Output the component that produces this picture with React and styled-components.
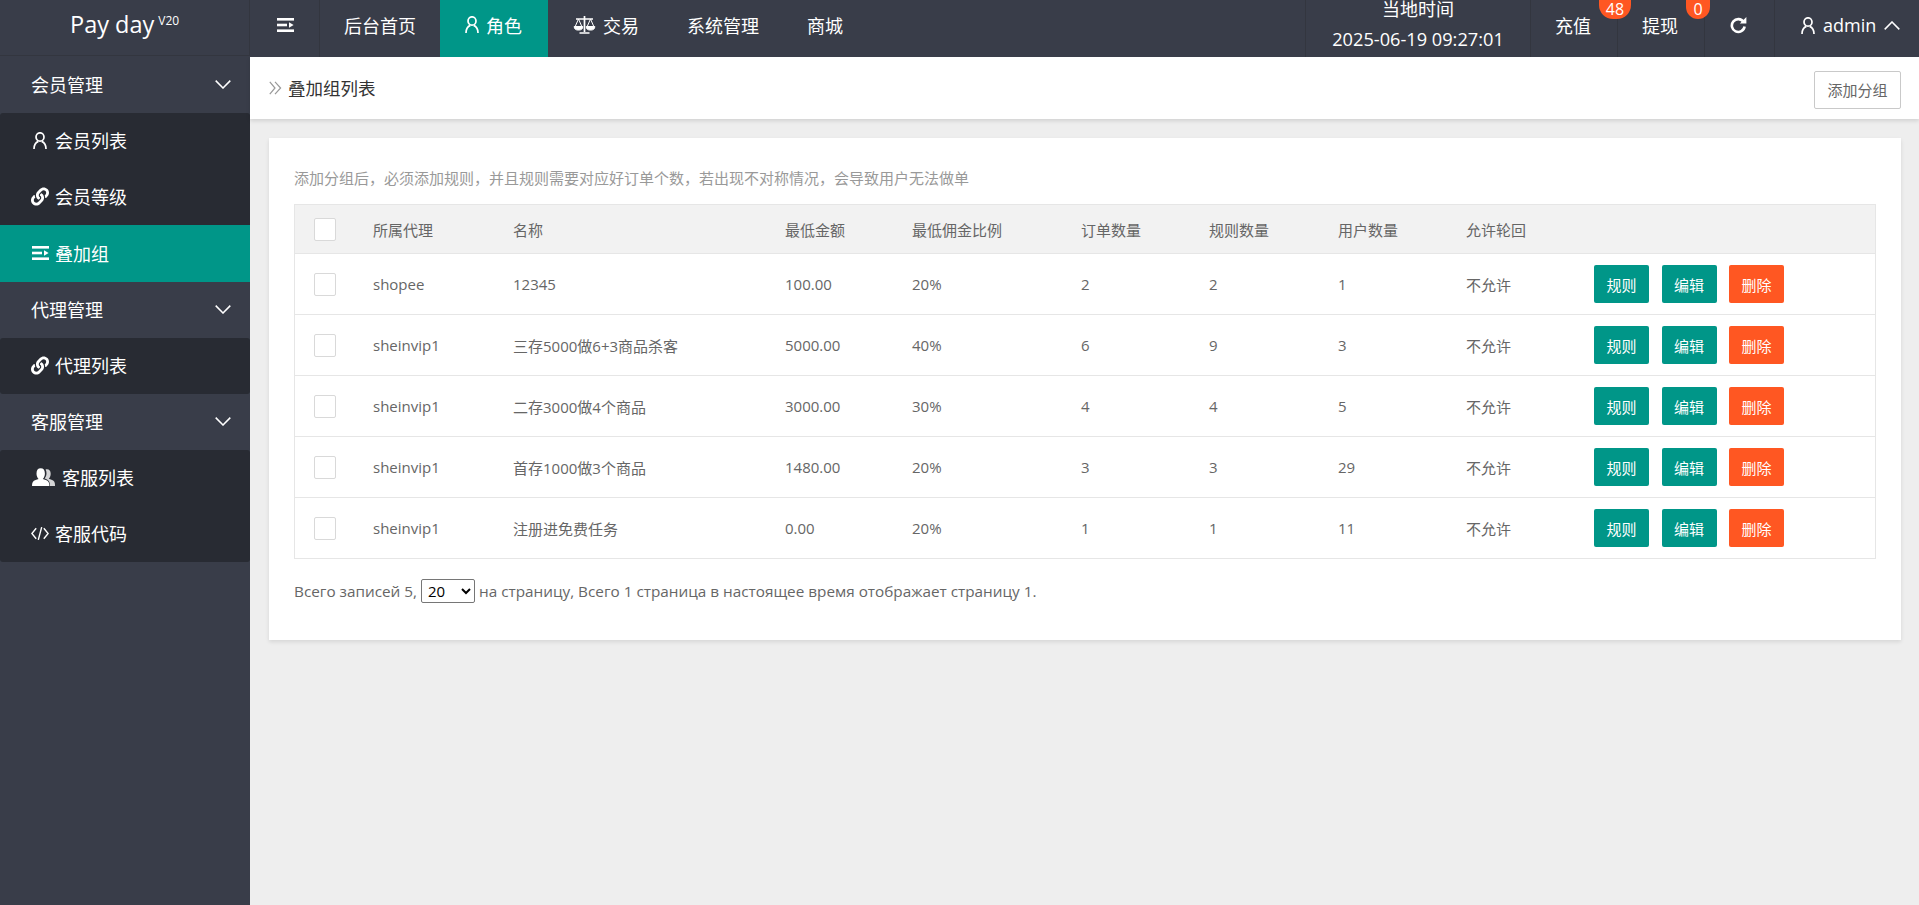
import React from "react";
import styled, { createGlobalStyle } from "styled-components";
import { FaLink } from "react-icons/fa";

const Global = createGlobalStyle`
  html, body { margin: 0; padding: 0; height: 100%; }
  body { font-family: "Open Sans", "Noto Sans CJK SC", sans-serif; background: #eeeeee; color: #666; }
  * { box-sizing: border-box; }
`;

const Shell = styled.div`display: flex; flex-direction: column; height: 905px; overflow: hidden;`;
const Header = styled.header`display: flex; height: 57px; flex: none; background: #393d49; color: #fff; font-size: 18px; position: relative; z-index: 2;`;
const Logo = styled.div`
  width: 250px; flex: none; height: 56px; display: flex; align-items: flex-start; justify-content: flex-start;
  padding: 9px 0 0 70px; font-size: 23.5px; line-height: 30px; border-bottom: 1px solid #33363f; border-right: 1px solid #33363f;
  sup { font-size: 12px; line-height: 14px; margin: 5px 0 0 4px; }
`;
const Nav = styled.nav`display: flex; flex: 1;`;
const NavItem = styled.div`
  display: flex; align-items: center; gap: ${p => p.$gap || 6}px;
  height: 57px; width: ${p => p.$w}px; padding: 0 0 8px ${p => p.$pad ?? 24}px; flex: none; white-space: nowrap;
  background: ${p => p.$active ? "#009688" : "transparent"};
  border-right: ${p => p.$divider ? "1px solid #33363f" : "0"};
`;
const RightGroup = styled.div`display: flex;`;
const RightItem = styled.div`
  position: relative; display: flex; align-items: center; height: 57px; width: ${p => p.$w}px; flex: none;
  padding: 0 0 7px ${p => p.$pad}px; border-left: 1px solid #33363f; gap: ${p => p.$gap || 0}px; white-space: nowrap;
`;
const TimeBox = styled.div`
  width: 225px; height: 57px; flex: none; border-left: 1px solid #33363f; text-align: center; overflow: hidden;
`;
const TimeLabel = styled.div`line-height: 18px;`;
const TimeValue = styled.div`line-height: 42px; font-size: 18.2px;`;
const Badge = styled.span`
  position: absolute; top: 0; left: 68px; height: 19px; width: ${p => p.$w}px; border-radius: 0 0 14px 14px;
  background: #ff5722; color: #fff; font-size: 16px; line-height: 18px; text-align: center; z-index: 3;
`;
const Body = styled.div`display: flex; flex: 1; min-height: 0;`;
const Sidebar = styled.aside`width: 250px; flex: none; background: #393d49; color: #fff; font-size: 18px;`;
const Group = styled.div`
  height: 56px; display: flex; align-items: center; justify-content: space-between; padding: 0 19px 2px 31px;
`;
const SubMenu = styled.div`background: #282b33; border-radius: 3px;`;
const SubItem = styled.div`
  height: ${p => p.$active ? 57 : 56}px; display: flex; align-items: center; padding: 0 0 2px 31px; gap: ${p => p.$gap || 6}px;
  background: ${p => p.$active ? "#009688" : "transparent"};
`;
const IconSlot = styled.span`display: inline-flex; width: ${p => p.$w || 18}px; justify-content: center; flex: none;`;
const Main = styled.main`flex: 1; min-width: 0; background: #eeeeee;`;
const SubHeader = styled.div`
  height: 62px; background: #fff; display: flex; align-items: center; justify-content: space-between;
  padding: 0 18px 0 19px; box-shadow: 0 2px 4px rgba(0,0,0,.12);
`;
const Title = styled.div`display: flex; align-items: center; gap: 6px; font-size: 17.5px; color: #333; padding-bottom: 1px;`;
const GhostButton = styled.button`
  height: 38px; width: 87px; padding: 0; margin-top: 3px; background: #fff; border: 1px solid #c9c9c9; border-radius: 2px;
  color: #666; font: inherit; font-size: 15px;
`;
const Card = styled.section`
  margin: 19px 18px 0 19px; background: #fff; padding: 29px 25px 0 25px; height: 502px;
  box-shadow: 0 2px 4px rgba(0,0,0,.1);
`;
const Hint = styled.p`margin: 0; height: 37px; line-height: 22px; font-size: 15px; color: #999;`;
const Table = styled.table`
  width: 100%; table-layout: fixed; border-collapse: separate; border-spacing: 0; border: 1px solid #e6e6e6; border-bottom: 0;
  font-size: 15px; color: #666;
`;
const Th = styled.th`
  height: 49px; padding: 0 0 0 ${p => p.$check ? 19 : 20}px; background: #f2f2f2; font-weight: 400; text-align: left; border-bottom: 1px solid #e6e6e6;
`;
const Td = styled.td`height: 61px; padding: 0 0 0 ${p => p.$check ? 19 : 20}px; border-bottom: 1px solid #e6e6e6;`;
const Check = styled.span`display: block; width: 22px; height: 23px; background: #fff; border: 1px solid #d9d9d9; border-radius: 2px;`;
const Actions = styled.div`display: flex; gap: 12.5px;`;
const ActionButton = styled.button`
  width: 55px; height: 38px; padding: 0; border: 0; border-radius: 2px; color: #fff; font: inherit; font-size: 15px;
  background: ${p => p.$danger ? "#ff5722" : "#009688"};
`;
const Pager = styled.div`display: flex; align-items: center; gap: 4px; margin-top: 20px; height: 24px; font-size: 15.3px; color: #666;`;
const PageSelect = styled.select`
  width: 54px; height: 24px; font: inherit; font-size: 15px; color: #000; background: #fff; border: 1px solid #767676; border-radius: 2px; padding: 0 0 0 2px;
`;

const User = ({ size = 17 }) => (
  <svg width={size * 14 / 17} height={size} viewBox="0 0 14 17" fill="none" stroke="currentColor" strokeWidth="1.7">
    <ellipse cx="7" cy="5" rx="4" ry="4.2" />
    <path d="M1 17c0-4 2-6.6 4.3-7.6M13 17c0-4-2-6.6-4.3-7.6" />
  </svg>
);
const Shrink = () => (
  <svg width="17" height="14" viewBox="0 0 17 14" fill="currentColor">
    <rect x="0" y="0" width="17" height="2.6" />
    <rect x="0" y="5.7" width="10" height="2.6" />
    <path d="M12 4.2 16.6 7 12 9.8z" />
    <rect x="0" y="11.4" width="17" height="2.6" />
  </svg>
);
const Balance = () => (
  <svg width="23" height="18" viewBox="0 0 23 18" fill="none" stroke="currentColor" strokeWidth="1">
    <path d="M11.500 0v16M3 3h17M6.500 17h10" strokeWidth="1.7" />
    <path d="M5.500 3 2.200 10.500M5.500 3 8.800 10.500M17.500 3 14.200 10.500M17.500 3 20.800 10.500" />
    <path d="M1.200 10.500h8.600a4.300 3.600 0 0 1-8.600 0zM13.200 10.500h8.600a4.300 3.600 0 0 1-8.600 0z" fill="currentColor" />
  </svg>
);
const ChevronDown = ({ up }) => (
  <svg width="16" height="9" viewBox="0 0 16 9" fill="none" stroke="currentColor" strokeWidth="1.5">
    <path d={up ? "M.7 8.4 8 1l7.3 7.4" : "M.7.6 8 8l7.3-7.4"} />
  </svg>
);
const Refresh = () => (
  <svg width="17" height="17" viewBox="0 0 17 17" fill="none" stroke="currentColor">
    <path d="M13.600 5A6.400 6.400 0 1 0 14.600 9.500" strokeWidth="2.6" />
    <path d="M9.800 6.400h6.600V0z" fill="currentColor" stroke="none" />
  </svg>
);
const Chevrons = () => (
  <svg width="13" height="14" viewBox="0 0 13 14" fill="none" stroke="#999" strokeWidth="1.2">
    <path d="M.8.8 6 7 .8 13.200M6 .8 11.600 7 6 13.200" />
  </svg>
);
const People = () => (
  <svg width="24" height="18" viewBox="0 0 24 18" fill="currentColor">
    <path d="M0 18c0-3.500 1-5 3.600-5.900l3-1.100C5.300 9.700 4.500 7.800 4.500 5.500 4.500 2.200 6 .3 8.700.3s4.200 1.900 4.200 5.200c0 2.300-.8 4.200-2.100 5.500l3 1.100c2.600.9 3.600 2.400 3.600 5.900z" />
    <path d="M15 1.300c2.300 0 3.700 1.700 3.700 4.500 0 2-.7 3.700-1.900 4.900l2.700 1c2.500.9 3.500 2.300 3.500 5.300v1h-5c0-4-1.300-5.800-4-6.900l-1.400-.5c1.300-1.500 1.900-3.300 1.900-5.300 0-1.400-.3-2.700-.9-3.700.5-.2 1-.3 1.400-.3z" opacity=".8" />
  </svg>
);
const CodeIcon = () => (
  <svg width="19" height="15" viewBox="0 0 19 15" fill="none" stroke="currentColor" strokeWidth="1.5">
    <path d="M5.500 2 .9 7.500l4.600 5.500M13.500 2l4.600 5.500-4.600 5.500M11.300.8 7.700 14.200" />
  </svg>
);

const rows = [
  ["shopee", "12345", "100.00", "20%", 2, 2, 1],
  ["sheinvip1", "三存5000做6+3商品杀客", "5000.00", "40%", 6, 9, 3],
  ["sheinvip1", "二存3000做4个商品", "3000.00", "30%", 4, 4, 5],
  ["sheinvip1", "首存1000做3个商品", "1480.00", "20%", 3, 3, 29],
  ["sheinvip1", "注册进免费任务", "0.00", "20%", 1, 1, 11],
];
const columns = ["所属代理", "名称", "最低金额", "最低佣金比例", "订单数量", "规则数量", "用户数量", "允许轮回"];
const widths = [58, 140, 272, 127, 169, 128, 129, 128, 128];

export default function App() {
  return (
    <Shell>
      <Global />
      <Header>
        <Logo>Pay day<sup>V20</sup></Logo>
        <Nav>
          <NavItem $w={70} $pad={27} $divider><Shrink /></NavItem>
          <NavItem $w={120}>后台首页</NavItem>
          <NavItem $w={108} $active $pad={25} $gap={7}><User />角色</NavItem>
          <NavItem $w={115} $pad={25} $gap={7}><Balance />交易</NavItem>
          <NavItem $w={120}>系统管理</NavItem>
          <NavItem $w={84}>商城</NavItem>
        </Nav>
        <RightGroup>
          <TimeBox><TimeLabel>当地时间</TimeLabel><TimeValue>2025-06-19 09:27:01</TimeValue></TimeBox>
          <RightItem $w={87} $pad={24}>充值<Badge $w={32}>48</Badge></RightItem>
          <RightItem $w={87} $pad={24}>提现<Badge $w={24}>0</Badge></RightItem>
          <RightItem $w={70} $pad={25}><Refresh /></RightItem>
          <RightItem $w={145} $pad={26} $gap={8}><User /><span>admin</span><ChevronDown up /></RightItem>
        </RightGroup>
      </Header>
      <Body>
        <Sidebar>
          <Group>会员管理<ChevronDown /></Group>
          <SubMenu>
            <SubItem><IconSlot><User /></IconSlot>会员列表</SubItem>
            <SubItem><IconSlot><FaLink size={19} /></IconSlot>会员等级</SubItem>
            <SubItem $active><IconSlot><Shrink /></IconSlot>叠加组</SubItem>
          </SubMenu>
          <Group>代理管理<ChevronDown /></Group>
          <SubMenu>
            <SubItem><IconSlot><FaLink size={19} /></IconSlot>代理列表</SubItem>
          </SubMenu>
          <Group>客服管理<ChevronDown /></Group>
          <SubMenu>
            <SubItem $gap={6}><IconSlot $w={25}><People /></IconSlot>客服列表</SubItem>
            <SubItem><IconSlot><CodeIcon /></IconSlot>客服代码</SubItem>
          </SubMenu>
        </Sidebar>
        <Main>
          <SubHeader>
            <Title><Chevrons />叠加组列表</Title>
            <GhostButton>添加分组</GhostButton>
          </SubHeader>
          <Card>
            <Hint>添加分组后，必须添加规则，并且规则需要对应好订单个数，若出现不对称情况，会导致用户无法做单</Hint>
            <Table>
              <colgroup>
                {widths.map((w, i) => <col key={i} width={w} />)}
                <col />
              </colgroup>
              <thead>
                <tr>
                  <Th $check><Check /></Th>
                  {columns.map(c => <Th key={c}>{c}</Th>)}
                  <Th />
                </tr>
              </thead>
              <tbody>
                {rows.map((r, i) => (
                  <tr key={i}>
                    <Td $check><Check /></Td>
                    {r.map((v, j) => <Td key={j}>{v}</Td>)}
                    <Td>不允许</Td>
                    <Td>
                      <Actions>
                        <ActionButton>规则</ActionButton>
                        <ActionButton>编辑</ActionButton>
                        <ActionButton $danger>删除</ActionButton>
                      </Actions>
                    </Td>
                  </tr>
                ))}
              </tbody>
            </Table>
            <Pager>
              <span>Всего записей 5,</span>
              <PageSelect defaultValue="20"><option>20</option><option>50</option><option>100</option></PageSelect>
              <span>на страницу, Всего 1 страница в настоящее время отображает страницу 1.</span>
            </Pager>
          </Card>
        </Main>
      </Body>
    </Shell>
  );
}
